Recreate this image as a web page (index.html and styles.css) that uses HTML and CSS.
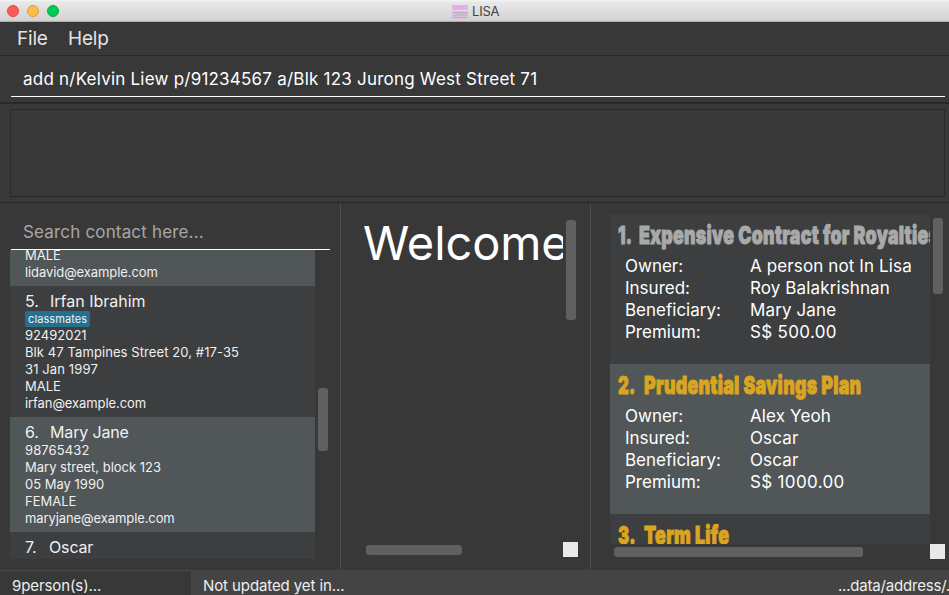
FILE: index.html
```html
<!DOCTYPE html>
<html lang="en">
<head>
<meta charset="utf-8">
<title>LISA</title>
<link rel="stylesheet" href="styles.css">
</head>
<body>
<div class="window">
  <header class="titlebar">
    <div class="lights"><i class="light red"></i><i class="light yellow"></i><i class="light green"></i></div>
    <svg class="app-icon" width="16" height="15" viewBox="0 0 16 15">
      <rect width="16" height="15" fill="#dcc0df"/>
      <path d="M0 2.500h15M2 4h10M0 11.500h16" stroke="#ec9fe8" stroke-width="1.200"/>
      <path d="M0 6.500h16M0 .5h16" stroke="#dbe0e6" stroke-width="1.200"/>
      <path d="M0 8.500h16M3 10h13M2 13.500h13" stroke="#b9afbd" stroke-width="1.200" stroke-dasharray="3 .5 5 1"/>
      <path d="M1 5.500h4M9 4.500h6M0 12.500h3" stroke="#b6bfd8" stroke-width=".8"/>
    </svg>
    <span class="app-title">LISA</span>
  </header>
  <nav class="menubar"><span class="m-file">File</span><span class="m-help">Help</span></nav>
  <section class="command"><div class="command-field"><span>add n/Kelvin Liew p/91234567 a/Blk 123 Jurong West Street 71</span></div></section>
  <section class="result"><div class="result-box"></div></section>
  <main class="panes">
    <section class="contacts">
      <div class="search"><span>Search contact here...</span></div>
      <div class="contact-body">
        <div class="contact-list">
          <article class="contact alt cut"><p>MALE</p><p class="email">lidavid@example.com</p></article>
          <article class="contact">
            <h2><span class="num">5.</span>Irfan Ibrahim</h2>
            <div class="tags"><span class="tag">classmates</span></div>
            <p>92492021</p><p class="address">Blk 47 Tampines Street 20, #17-35</p><p class="birthday">31 Jan 1997</p><p>MALE</p><p class="email">irfan@example.com</p>
          </article>
          <article class="contact alt">
            <h2 class="tight"><span class="num">6.</span>Mary Jane</h2>
            <p class="birthday">98765432</p><p>Mary street, block 123</p><p>05 May 1990</p><p>FEMALE</p><p class="email">maryjane@example.com</p>
          </article>
          <article class="contact"><h2 class="tight"><span class="num seven">7.</span>Oscar</h2></article>
        </div>
        <div class="thumb contact-thumb"></div>
      </div>
    </section>
    <section class="welcome">
      <div class="welcome-view"><span>Welcome</span></div>
      <div class="thumb welcome-v"></div>
      <div class="thumb welcome-h"></div>
      <div class="corner"></div>
    </section>
    <section class="policies">
      <div class="policy-list">
        <article class="policy">
          <h2 class="expired"><span class="pnum">1.</span><span class="pname">Expensive Contract for Royalties</span></h2>
          <dl><dt>Owner:</dt><dd>A person not In Lisa</dd><dt>Insured:</dt><dd>Roy Balakrishnan</dd><dt>Beneficiary:</dt><dd>Mary Jane</dd><dt>Premium:</dt><dd class="money">S$ 500.00</dd></dl>
        </article>
        <article class="policy alt">
          <h2><span class="pnum wide">2.</span><span class="pname">Prudential Savings Plan</span></h2>
          <dl><dt>Owner:</dt><dd>Alex Yeoh</dd><dt>Insured:</dt><dd>Oscar</dd><dt>Beneficiary:</dt><dd>Oscar</dd><dt>Premium:</dt><dd class="money">S$ 1000.00</dd></dl>
        </article>
        <article class="policy"><h2><span class="pnum wide">3.</span><span class="pname">Term Life</span></h2></article>
      </div>
      <div class="thumb policy-v"></div>
      <div class="thumb policy-h"></div>
      <div class="corner"></div>
    </section>
  </main>
  <footer class="status">
    <div class="count"><span>9person(s)...</span></div>
    <div class="sync"><span>Not updated yet in...</span></div>
    <div class="path"><span>...data/address/...</span></div>
  </footer>
</div>
</body>
</html>
```
FILE: styles.css
```css
* { box-sizing: border-box; margin: 0; padding: 0; }
body { width: 949px; height: 595px; overflow: hidden; background: #383838; font-family: Inter, "Liberation Sans", sans-serif; color: #fff; white-space: nowrap; }
.window { height: 595px; display: grid; grid-template-rows: 22px 34px 48px 98px 368px 25px; }

.titlebar { display: flex; align-items: center; background: linear-gradient(#f6f6f6, #e8e8e8 10%, #d2d2d2); border-bottom: 1px solid #adadad; padding-left: 7px; }
.lights { display: flex; gap: 8px; width: 445px; }
.light { width: 12px; height: 12px; border-radius: 50%; border: 1px solid; }
.red { background: #fc5b57; border-color: #df4744; }
.yellow { background: #fdbc4b; border-color: #de9f34; }
.green { background: #00ca56; border-color: #13a744; }
.app-icon { margin-top: 2px; }
.app-title { margin: 1px 0 0 4px; font-size: 13px; line-height: 18px; letter-spacing: -.2px; color: #444; }

.menubar { display: flex; align-items: center; padding-left: 17px; border-bottom: 1px solid #292929; font-size: 19px; letter-spacing: -.2px; color: #e4e4e4; }
.m-file { width: 51px; }

.command { padding: 4px 4px 0 11px; border-bottom: 2px solid #292929; }
.command-field { height: 37px; padding-left: 12px; border-bottom: 1px solid #fff; font-size: 17px; letter-spacing: .22px; line-height: 38px; }

.result { padding: 5px 4px 5px 10px; }
.result-box { height: 88px; border: 1px solid #292929; }

.panes { display: grid; grid-template-columns: 341px 250px 1fr; border-top: 1px solid #292929; }
.contacts, .welcome { border-right: 1px solid #4f4f4f; margin: 1px 0; }
.contacts { padding: 9px 10px 0; }
.search { width: 319px; height: 37px; margin-left: 1px; padding-left: 12px; border-bottom: 1px solid #fff; font-size: 17px; letter-spacing: .17px; line-height: 38px; color: #a7a7a7; }
.contact-body { display: flex; gap: 3px; }
.contact-list { width: 305px; height: 309px; overflow: hidden; }
.contact { padding: 5px 15px; background: #3c3e3f; color: #f0f0f0; font-size: 13px; }
.contact.alt { background: #515658; }
.contact.cut { display: flow-root; height: 36px; padding-top: 0; }
.contact.cut p:first-child { margin-top: -3px; }
.contact h2 { font-size: 16px; font-weight: 400; line-height: 20px; }
.contact h2.tight { letter-spacing: -.15px; }
.contact p { line-height: 17px; }
.email { letter-spacing: -.09px; }
.address { letter-spacing: .09px; }
.birthday { letter-spacing: .12px; }
.num { display: inline-block; width: 25px; }
.num.seven { width: 24px; }
.tags { height: 16px; display: flex; }
.tag { height: 16px; border-radius: 2px; padding: 0 3px; font-size: 11px; letter-spacing: .1px; line-height: 16px; background: #25708e; }
.thumb { background: #606060; border-radius: 3px; }
.contact-thumb { width: 10px; height: 63px; margin-top: 138px; }

.welcome { display: grid; grid-template-columns: 203px 15px; grid-template-rows: 326px 15px; padding: 12px 0 0 19px; }
.welcome-view { overflow: hidden; font-size: 47px; letter-spacing: -.1px; line-height: 54px; padding-left: 3px; }
.welcome-v { width: 10px; height: 100px; margin: 4px 0 0 3px; }
.welcome-h { width: 96px; height: 10px; margin: 3px 0 0 6px; }
.corner { width: 15px; height: 15px; background: #e9e9e9; }

.policies { display: grid; grid-template-columns: 320px 15px; grid-template-rows: 330px 15px; padding: 11px 0 0 19px; }
.policy-list { overflow: hidden; }
.policy { height: 150px; padding: 7px 0 0 8px; background: #3c3e3f; }
.policy.alt { background: #515658; }
.policy h2 { height: 29px; display: flex; font-size: 25px; font-weight: 900; line-height: 29px; letter-spacing: .4px; color: #daa520; -webkit-text-stroke: 1px currentColor; }
.policy h2.expired { color: #a9a9a9; }
.pnum { width: 23px; transform: scaleX(.67); transform-origin: left; }
.pnum.wide { width: 26px; }
.pname { transform: scaleX(.71); transform-origin: left; }
.policy dl { display: grid; grid-template-columns: 125px 1fr; grid-auto-rows: 22px; margin: 5px 0 0 7px; font-size: 17px; line-height: 22px; }
.policy dd { letter-spacing: .12px; }
.policy dd.money { letter-spacing: .34px; }
.policy-v { width: 10px; height: 76px; margin: 4px 0 0 3px; }
.policy-h { width: 249px; height: 10px; margin: 3px 0 0 4px; }

.status { display: grid; grid-template-columns: 191px 1fr 111px; font-size: 15px; letter-spacing: -.1px; line-height: 32px; color: #eee; background: #444; overflow: hidden; }
.count { background: #383838; border-top: 1px solid #484848; padding-left: 12px; line-height: 30px; }
.sync { padding-left: 12px; }
.path { letter-spacing: -.2px; }
```
